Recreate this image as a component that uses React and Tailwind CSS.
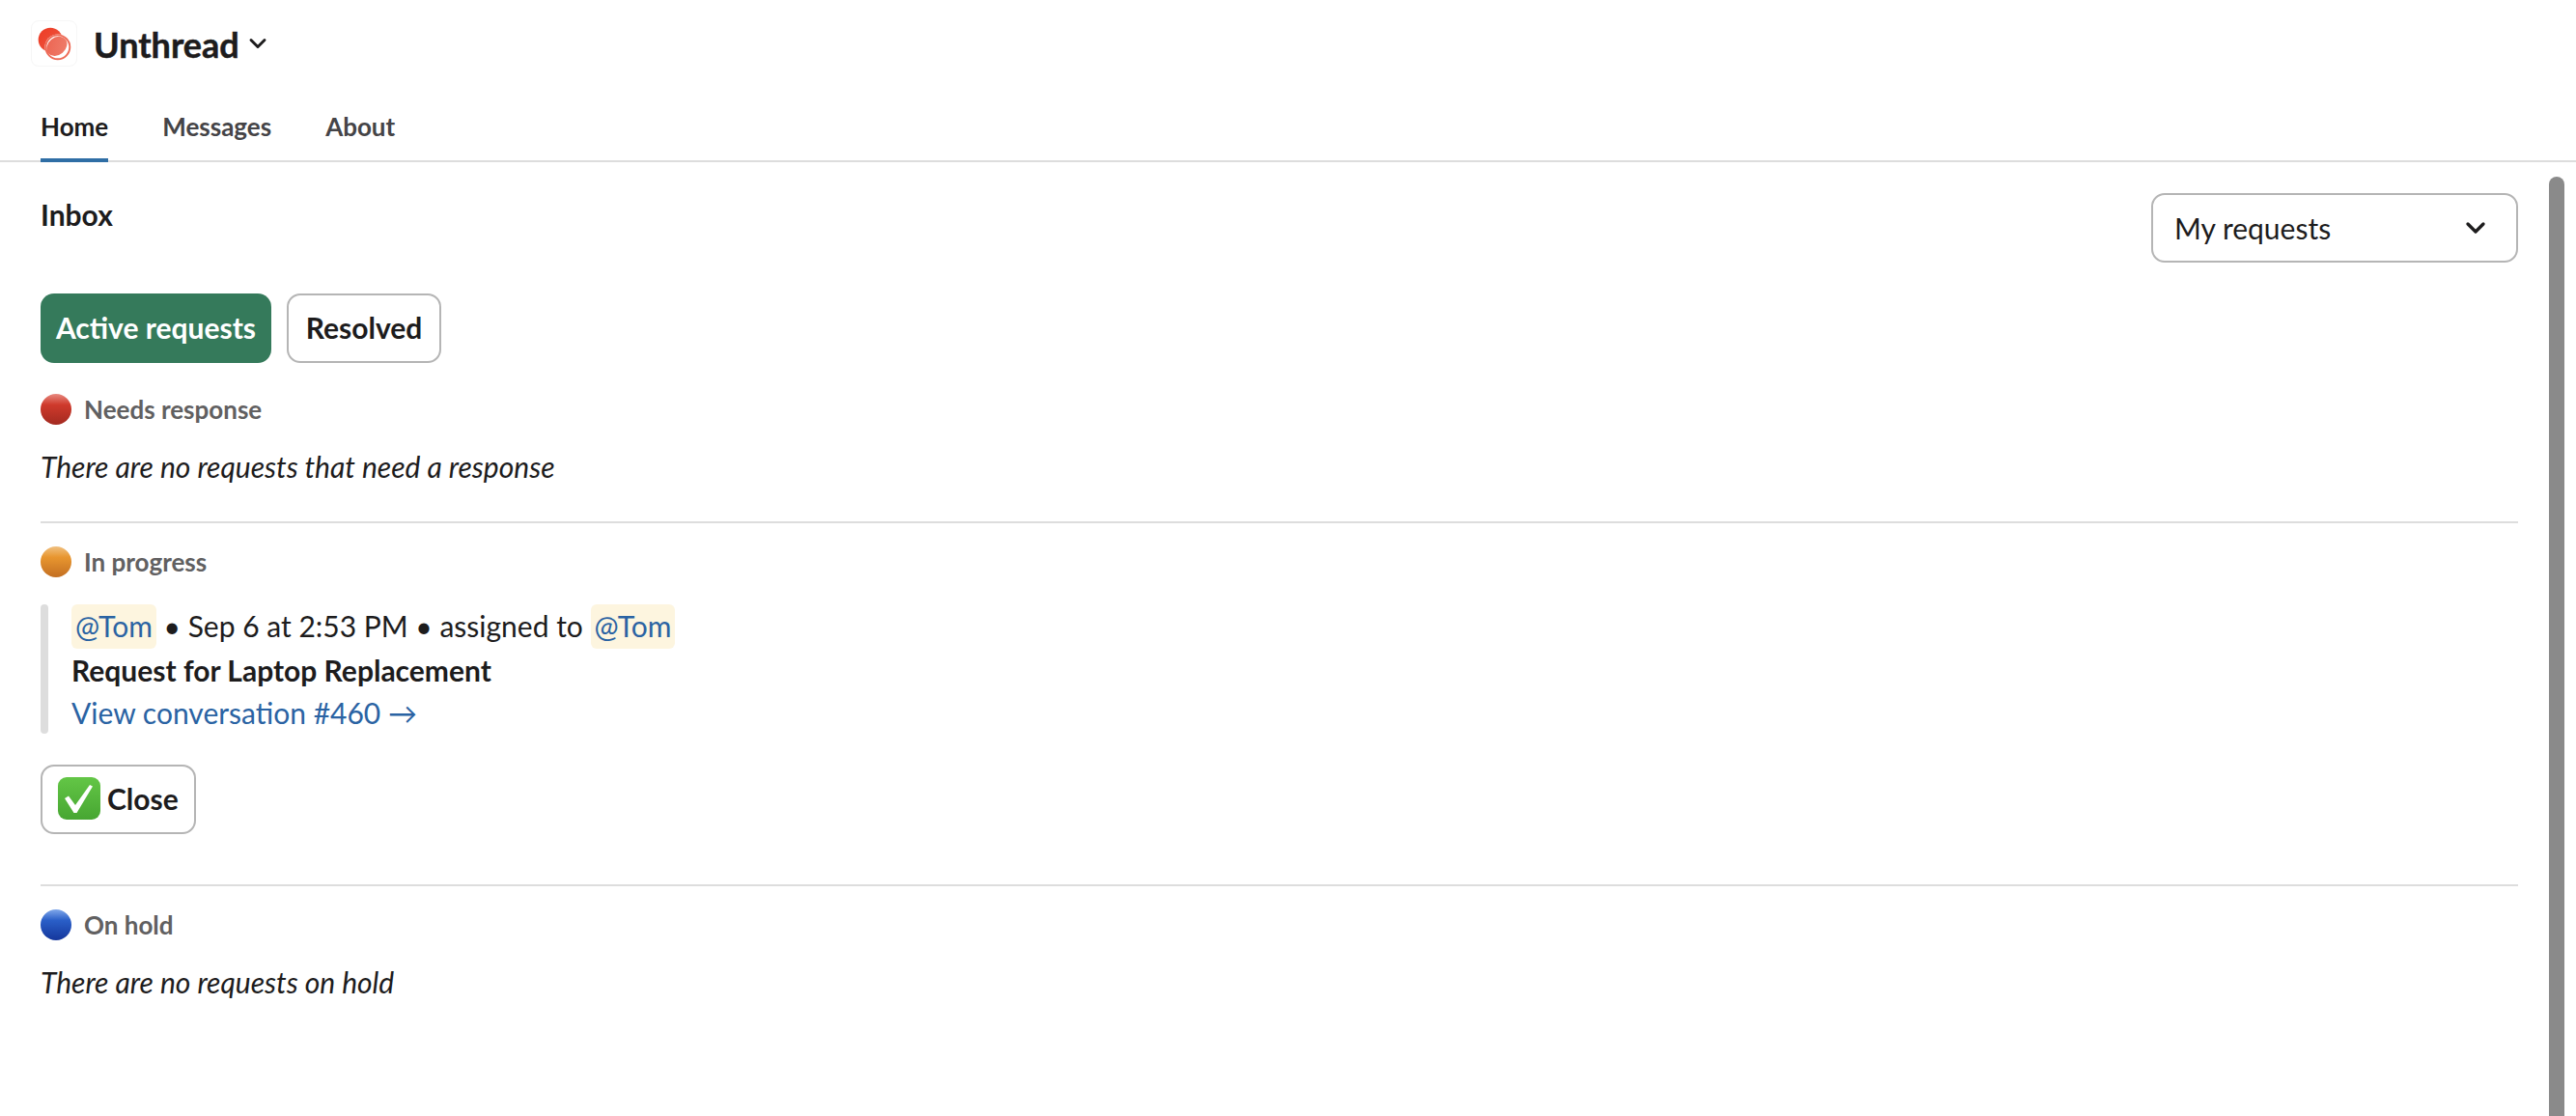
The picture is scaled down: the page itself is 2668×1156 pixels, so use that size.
import { ChevronDown } from "lucide-react";

const Dot = ({ id, light, mid, dark }) => (
  <svg viewBox="0 0 32 32" className="h-8 w-8 shrink-0">
    <defs>
      <linearGradient id={id} x1="0" y1="0" x2="0" y2="1">
        <stop offset="0" stopColor={light} />
        <stop offset="0.35" stopColor={mid} />
        <stop offset="1" stopColor={dark} />
      </linearGradient>
    </defs>
    <circle cx="16" cy="16" r="16" fill={`url(#${id})`} />
  </svg>
);

const CheckEmoji = () => (
  <svg viewBox="0 0 44 44" className="h-11 w-11 shrink-0">
    <defs>
      <linearGradient id="check-bg" x1="0" y1="0" x2="0" y2="1">
        <stop offset="0" stopColor="#63c646" />
        <stop offset="1" stopColor="#47a632" />
      </linearGradient>
    </defs>
    <rect width="44" height="44" rx="9" fill="url(#check-bg)" />
    <path d="M7 22l4-2.500 7 9.500L33 8l3 1.500L19.500 37h-3z" fill="#fff" />
  </svg>
);

const Logo = () => (
  <div className="flex h-12 w-12 items-center justify-center rounded-lg border border-[#f6f6f6]">
    <svg viewBox="0 0 48 48" className="h-12 w-12">
      <defs>
        <linearGradient id="logo-a" x1="0" y1="0" x2="1" y2="1">
          <stop offset="0" stopColor="#ee3a24" />
          <stop offset="1" stopColor="#ec5a44" />
        </linearGradient>
        <linearGradient id="logo-b" x1="0" y1="0" x2="1" y2="1">
          <stop offset="0" stopColor="#ec6350" />
          <stop offset="1" stopColor="#ef7f6d" />
        </linearGradient>
      </defs>
      <circle cx="20" cy="20" r="13" fill="url(#logo-a)" />
      <circle cx="28" cy="28" r="14" fill="#fff" />
      <circle cx="28" cy="28" r="13" fill="none" stroke="#ee6a56" strokeWidth="2" />
      <ellipse cx="27" cy="27" rx="12" ry="9.500" transform="rotate(-40 27 27)" fill="url(#logo-b)" />
    </svg>
  </div>
);

const Mention = ({ children }) => (
  <span className="inline-block h-[46px] rounded-md bg-[#fdf5df] px-1 leading-[44px] text-[#2a63a3]">{children}</span>
);

const SectionLabel = ({ dot, children }) => (
  <div className="flex h-8 items-center gap-[13px]">
    {dot}
    <span className="text-[26px] font-bold leading-8 text-[#616061]">{children}</span>
  </div>
);

const App = () => {
  return (
    <div className="flex h-[1156px] w-[2668px] flex-col overflow-hidden bg-white font-['Lato',sans-serif] text-[#1d1c1d]">
      <header className="h-[168px] shrink-0 border-b-2 border-[#dddddd]">
        <div className="flex items-center pl-8 pt-5">
          <Logo />
          <h1 className="ml-[17px] mt-[2px] text-[36px] font-bold leading-[48px] [-webkit-text-stroke:0.5px_#1d1c1d]">Unthread</h1>
          <ChevronDown className="ml-[5px] h-7 w-7" strokeWidth={2.500} />
        </div>
        <nav className="mt-[27px] flex gap-14 pl-[42px] text-[26px] font-bold">
          <a className="relative h-[71px] leading-[69px] text-[#1d1c1d]">
            Home
            <span className="absolute inset-x-0 bottom-0 h-1 bg-[#2f6ea5]" />
          </a>
          <a className="leading-[69px] text-[#454447]">Messages</a>
          <a className="leading-[69px] text-[#454447]">About</a>
        </nav>
      </header>

      <div className="flex min-h-0 flex-1">
        <main className="w-[2608px] shrink-0 pl-[42px]">
          <div className="flex items-start justify-between pt-8">
            <h2 className="mt-[2px] text-[30px] font-bold leading-[40px]">Inbox</h2>
            <button className="flex h-[72px] w-[380px] items-center justify-between rounded-[14px] border-2 border-[#b5b5b5] pl-[22px] pr-[26px] text-[30px]">
              My requests
              <ChevronDown className="h-8 w-8 text-[#1d1c1d]" strokeWidth={2.500} />
            </button>
          </div>

          <div className="mt-8 flex gap-4">
            <button className="h-[72px] w-[239px] rounded-[14px] bg-[#357a5b] pb-[2px] text-[30px] font-bold text-white">Active requests</button>
            <button className="h-[72px] w-[160px] rounded-[14px] border-2 border-[#b5b5b5] pb-[2px] text-[30px] font-bold">Resolved</button>
          </div>

          <div className="mt-[32px]">
            <SectionLabel dot={<Dot id="red" light="#e88a80" mid="#cf3a2c" dark="#a32a20" />}>Needs response</SectionLabel>
            <p className="mt-[21px] text-[30px] italic leading-[44px]">There are no requests that need a response</p>
          </div>

          <hr className="mt-[35px] border-t-2 border-[#dddddd]" />

          <div className="mt-6">
            <SectionLabel dot={<Dot id="orange" light="#f0c080" mid="#e8962f" dark="#c36f22" />}>In progress</SectionLabel>
            <div className="mt-7 flex gap-6">
              <div className="w-2 shrink-0 rounded bg-[#dddddd]" />
              <div className="text-[30px]">
                <div className="h-[46px] leading-[44px]">
                  <Mention>@Tom</Mention> • Sep 6 at 2:53 PM • assigned to <Mention>@Tom</Mention>
                </div>
                <div className="h-[45px] font-bold leading-[45px]">Request for Laptop Replacement</div>
                <div className="h-[43px] leading-[43px] text-[#2a63a3]">View conversation #460 →</div>
              </div>
            </div>
            <button className="mt-8 flex h-[72px] w-[161px] items-center gap-[7px] rounded-[14px] border-2 border-[#b5b5b5] pb-[2px] pl-4 text-[30px] font-bold">
              <CheckEmoji />
              Close
            </button>
          </div>

          <hr className="mt-[52px] border-t-2 border-[#dddddd]" />

          <div className="mt-6">
            <SectionLabel dot={<Dot id="blue" light="#80a8ea" mid="#2a5fc8" dark="#15379c" />}>On hold</SectionLabel>
            <p className="mt-[21px] text-[30px] italic leading-[44px]">There are no requests on hold</p>
          </div>
        </main>

        <div className="ml-8 mt-[15px] w-4 shrink-0 rounded-t-lg bg-[#8a8a8a]" />
      </div>
    </div>
  );
};

export default App;
